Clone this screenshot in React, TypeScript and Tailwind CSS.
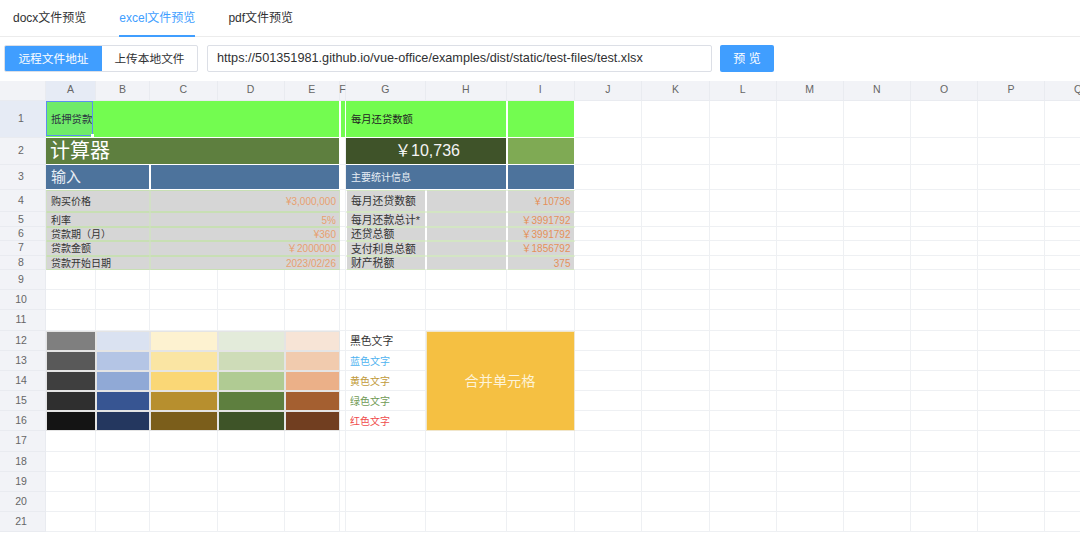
import type { ReactNode } from "react";

const COLUMNS = ["A", "B", "C", "D", "E", "F", "G", "H", "I", "J", "K", "L", "M", "N", "O", "P", "Q"];

const GRID_LINE = "border-r border-b border-[#eef0f3]";
const CELL = "flex items-center overflow-hidden whitespace-nowrap pt-[1px]";
const INPUT_GRAY = "bg-[#d6d6d6] border-y border-y-[#c8dfb4] border-x border-x-[#d2e0c6] text-[#333]";
const STATS_GRAY = "bg-[#d6d6d6] border-x border-white border-y border-y-[#d3e5c3] text-[#333]";

function Cell({ className = GRID_LINE, children }: { className?: string; children?: ReactNode }) {
  return <div className={`${CELL} ${className}`}>{children}</div>;
}

function RowHead({ n, active }: { n: number; active?: boolean }) {
  return (
    <div
      className={`flex items-center justify-center border-r border-b border-[#e9ebf0] pr-[3px] pt-[1px] text-[10.5px] text-[#666] ${
        active ? "bg-[#e6ebf5]" : "bg-[#f2f3f7]"
      }`}
    >
      {n}
    </div>
  );
}

function Blanks({ count }: { count: number }) {
  return (
    <>
      {Array.from({ length: count }).map((_, i) => (
        <Cell key={i} />
      ))}
    </>
  );
}

const inputRows = [
  { label: "购买价格", value: "¥3,000,000", stat: "每月还贷数额", result: "￥10736" },
  { label: "利率", value: "5%", stat: "每月还款总计*", result: "￥3991792" },
  { label: "贷款期（月）", value: "¥360", stat: "还贷总额", result: "￥3991792" },
  { label: "贷款金额", value: "￥2000000", stat: "支付利息总额", result: "￥1856792" },
  { label: "贷款开始日期", value: "2023/02/26", stat: "财产税额", result: "375" },
];

const swatches = [
  ["bg-[#7f7f7f]", "bg-[#dae2f1]", "bg-[#fdf2d0]", "bg-[#e3ebda]", "bg-[#f7e4d6]"],
  ["bg-[#595959]", "bg-[#b4c5e5]", "bg-[#fae5a3]", "bg-[#cedcb8]", "bg-[#f1cbae]"],
  ["bg-[#3f3f3f]", "bg-[#90a9d6]", "bg-[#fad776]", "bg-[#b0cb93]", "bg-[#ebb088]"],
  ["bg-[#2f2f2f]", "bg-[#375592]", "bg-[#b78f2e]", "bg-[#5e7f3f]", "bg-[#a45f30]"],
  ["bg-[#141414]", "bg-[#24375f]", "bg-[#7b5e1b]", "bg-[#3e5428]", "bg-[#713e20]"],
];

const colorLabels = [
  { text: "黑色文字", cls: "text-[#333] text-[10.8px]" },
  { text: "蓝色文字", cls: "text-[#4fb3f0] text-[10px]" },
  { text: "黄色文字", cls: "text-[#c19a3a] text-[10px]" },
  { text: "绿色文字", cls: "text-[#6f9a55] text-[10px]" },
  { text: "红色文字", cls: "text-[#f04b4b] text-[10px]" },
];

function Sheet() {
  return (
    <div className="h-[452px] overflow-hidden">
      <div className="grid w-[1112px] grid-cols-[46px_50px_54px_67.5px_67px_55.5px_6px_79.5px_81.5px_67.5px_67.5px_68px_66.5px_67px_67.5px_67px_67px_67px] grid-rows-[19.5px_37.5px_26.5px_25.5px_22px_15px_14px_14.5px_14px_20.5px_20px_20.5px_20.5px_20px_20px_20px_20px_20.5px_20px_20.5px_20px_20px]">
        {/* column header */}
        <div className="border-r border-b border-[#e9ebf0] bg-[#f2f3f7]" />
        {COLUMNS.map((c) => (
          <div
            key={c}
            className={`flex items-center justify-center border-r border-b border-[#e9ebf0] text-[10.5px] text-[#666] ${
              c === "A" ? "bg-[#e6ebf5]" : "bg-[#f2f3f7]"
            }`}
          >
            {c}
          </div>
        ))}

        {/* row 1 */}
        <RowHead n={1} active />
        <div className="relative flex items-center whitespace-nowrap border-b border-white bg-[#73fc50] pt-[1px] text-[10.3px] text-[#222]">
          <div className="w-[46px] overflow-hidden pl-[5px]">抵押贷款</div>
          <div className="absolute left-0 top-0 h-[35px] w-[47px] border-[1.5px] border-[#5b8ff0] bg-[#5b8ff0]/15">
            <span className="absolute -bottom-[2px] -right-[2px] h-[3px] w-[3px] bg-white" />
          </div>
        </div>
        <div className="col-span-4 border-r border-b border-white bg-[#73fc50]" />
        <div className="border-x border-b border-white bg-[#73fc50]" />
        <Cell className="col-span-2 border-b border-r border-white bg-[#73fc50] pl-[5px] text-[10.3px] text-[#222]">每月还贷数额</Cell>
        <Cell className="border-b border-x border-white bg-[#73fc50]" />
        <Blanks count={8} />

        {/* row 2 */}
        <RowHead n={2} />
        <Cell className="col-span-5 border-b border-r border-white bg-[#5e7f3f] pl-[4px] text-[20px] text-white">计算器</Cell>
        <Cell />
        <Cell className="col-span-2 justify-center border-b border-r border-white bg-[#3f5329] pl-[3px] text-[16px] text-[#f4f4f4]">￥10,736</Cell>
        <Cell className="border-b border-x border-white bg-[#7faa54]" />
        <Blanks count={8} />

        {/* row 3 */}
        <RowHead n={3} />
        <Cell className="col-span-2 border-r border-b border-white bg-[#4d739c] pl-[5px] text-[15px] text-[#e8eef5]">输入</Cell>
        <Cell className="col-span-3 border-x border-b border-white bg-[#4d739c]" />
        <Cell />
        <Cell className="col-span-2 border-r border-b border-white bg-[#4d739c] pl-[5px] text-[10px] text-[#e8eef5]">主要统计信息</Cell>
        <Cell className="border-x border-b border-white bg-[#4d739c]" />
        <Blanks count={8} />

        {/* rows 4-8 */}
        {inputRows.map((r, i) => (
          <div key={r.label} className="contents">
            <RowHead n={i + 4} />
            <Cell className={`col-span-2 pl-[4px] text-[10px] ${INPUT_GRAY}`}>{r.label}</Cell>
            <Cell className={`col-span-3 justify-end pr-[3px] text-[10px] ${INPUT_GRAY}`}>
              <span className="text-[#e8a070]">{r.value}</span>
            </Cell>
            <Cell />
            <Cell className={`pl-[4px] text-[10.8px] ${STATS_GRAY}`}>{r.stat}</Cell>
            <Cell className={STATS_GRAY} />
            <Cell className={`justify-end pr-[3px] text-[10px] ${STATS_GRAY}`}>
              <span className="text-[#e5905a]">{r.result}</span>
            </Cell>
            <Blanks count={8} />
          </div>
        ))}

        {/* rows 9-11 */}
        {[9, 10, 11].map((n) => (
          <div key={n} className="contents">
            <RowHead n={n} />
            <Blanks count={17} />
          </div>
        ))}

        {/* rows 12-16 */}
        {swatches.map((row, i) => (
          <div key={i} className="contents">
            <RowHead n={i + 12} />
            {row.map((bg) => (
              <div key={bg} className={`border border-[#e4e4e4] ${bg}`} />
            ))}
            <Cell />
            <Cell className={`${GRID_LINE} pl-[4px] ${colorLabels[i].cls}`}>{colorLabels[i].text}</Cell>
            {i === 0 && (
              <div className="col-span-2 row-span-5 flex items-center justify-center border border-[#f0e6cc] bg-[#f5c042] pt-[1px] text-[14.2px] text-[#fdf3d8]">
                合并单元格
              </div>
            )}
            <Blanks count={8} />
          </div>
        ))}

        {/* rows 17-21 */}
        {[17, 18, 19, 20, 21].map((n) => (
          <div key={n} className="contents">
            <RowHead n={n} />
            <Blanks count={17} />
          </div>
        ))}
      </div>
    </div>
  );
}

export default function App() {
  return (
    <div className="h-[533px] w-[1080px] overflow-hidden bg-white font-['Liberation_Sans','Noto_Sans_CJK_SC',sans-serif]">
      <div className="flex h-[37px] gap-[33px] border-b border-[#ececec] pl-[13px] text-[12px] text-[#303133]">
        <div className="flex h-[37px] items-center pb-[1px]">docx文件预览</div>
        <div className="flex h-[37px] items-center border-b-2 border-[#409eff] text-[#409eff]">excel文件预览</div>
        <div className="flex h-[37px] items-center pb-[1px]">pdf文件预览</div>
      </div>
      <div className="flex h-[44px] items-start pl-[4px] pt-[8px] text-[11.7px]">
        <div className="flex h-[27px] w-[194px] overflow-hidden rounded-[2px] border border-[#dcdfe6]">
          <div className="flex w-[97px] items-center justify-center bg-[#409eff] text-white">远程文件地址</div>
          <div className="flex flex-1 items-center justify-center text-[#303133]">上传本地文件</div>
        </div>
        <div className="ml-[9px] flex h-[27px] w-[505px] items-center rounded-[2px] border border-[#dcdfe6] pl-[9px] text-[12.7px] text-[#303133]">
          https://501351981.github.io/vue-office/examples/dist/static/test-files/test.xlsx
        </div>
        <div className="ml-[8px] flex h-[27px] w-[54px] items-center justify-center rounded-[2px] bg-[#409eff] text-[12px] text-white">
          预 览
        </div>
      </div>
      <Sheet />
    </div>
  );
}
